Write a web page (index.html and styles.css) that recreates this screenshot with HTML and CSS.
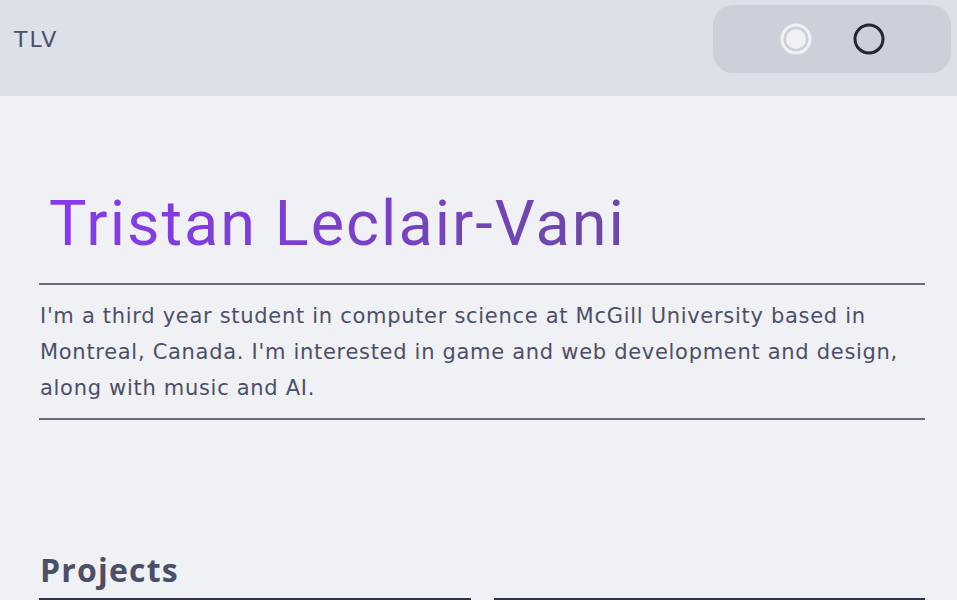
FILE: index.html
```html
<!DOCTYPE html>
<html lang="en">
<head>
<meta charset="utf-8">
<title>TLV</title>
<link rel="stylesheet" href="styles.css">
</head>
<body>
<header class="topbar">
  <div class="brand">TLV</div>
  <div class="theme-toggle">
    <span class="theme-btn light" aria-label="Light theme"><svg width="34" height="34" viewBox="0 0 34 34"><circle cx="17" cy="17" r="14" fill="none" stroke="#eff1f5" stroke-width="3"/><circle cx="17" cy="17" r="10" fill="#eff1f5"/></svg></span>
    <span class="theme-btn dark" aria-label="Dark theme"><svg width="34" height="34" viewBox="0 0 34 34"><circle cx="17" cy="17" r="14" fill="none" stroke="#232634" stroke-width="3"/></svg></span>
  </div>
</header>
<main class="content">
  <section class="intro">
    <h1 class="name">Tristan Leclair-Vani</h1>
    <p class="bio">I'm a third year student in computer science at McGill University based in Montreal, Canada. I'm interested in game and web development and design, along with music and AI.</p>
  </section>
  <section class="projects">
    <h2 class="section-title">Projects</h2>
    <div class="cards">
      <div class="card"></div>
      <div class="card"></div>
    </div>
  </section>
</main>
</body>
</html>
```
FILE: styles.css
```css
html, body {
  margin: 0;
  padding: 0;
}
body {
  background: #eff1f5;
  color: #4c4f69;
  font-family: "DejaVu Sans", "Open Sans", sans-serif;
  height: 600px;
  overflow: hidden;
}
.topbar {
  height: 96px;
  background: #dce0e8;
  display: flex;
  align-items: flex-start;
  justify-content: space-between;
  padding: 0 6px 0 14px;
  box-sizing: border-box;
}
.brand {
  font-family: "DejaVu Sans", sans-serif;
  font-size: 22px;
  letter-spacing: 2px;
  line-height: 80px;
  color: #4c4f69;
}
.theme-toggle {
  margin-top: 5px;
  width: 238px;
  height: 68px;
  border-radius: 20px;
  background: #ccd0da;
  display: flex;
  align-items: center;
  justify-content: center;
  gap: 39px;
  box-sizing: border-box;
}
.theme-btn {
  display: flex;
  width: 34px;
  height: 34px;
}
.content {
  padding: 0 32px 0 39px;
}
.intro {
  padding-top: 78px;
}
.name {
  margin: 0 0 9px 10px;
  width: fit-content;
  font-family: Roboto, sans-serif;
  font-weight: 400;
  font-size: 63px;
  letter-spacing: 2px;
  line-height: 100px;
  background: linear-gradient(90deg, #8839ef 0%, #6c48a6 100%);
  -webkit-background-clip: text;
  background-clip: text;
  color: transparent;
}
.bio {
  margin: 0;
  border-top: 2px solid #686a78;
  border-bottom: 2px solid #686a78;
  padding: 13px 0 12px 1px;
  font-size: 21px;
  letter-spacing: 0.7px;
  line-height: 36px;
  color: #4c4f69;
}
.projects {
  margin-top: 130px;
}
.section-title {
  margin: 0 0 8px 1px;
  font-family: "Open Sans", sans-serif;
  font-size: 32px;
  font-weight: 700;
  letter-spacing: 1.2px;
  line-height: 40px;
  color: #4c4f69;
}
.cards {
  display: grid;
  grid-template-columns: 1fr 1fr;
  gap: 23px;
}
.card {
  border-top: 2px solid #303446;
  height: 200px;
}
```
